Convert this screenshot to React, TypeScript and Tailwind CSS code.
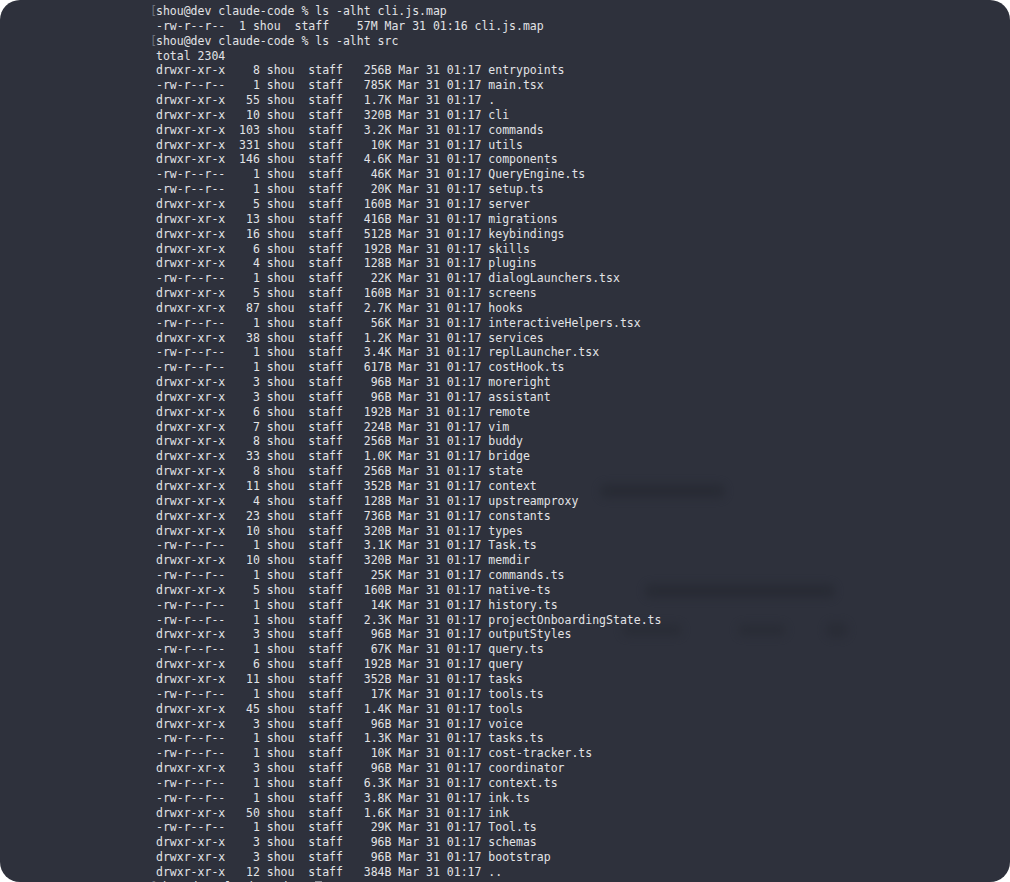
import React from "react";

type Entry = [string, number, string, string];

const DIR = "drwxr-xr-x";
const FILE = "-rw-r--r--";

const ENTRIES: Entry[] = [
  [DIR, 8, "256B", "entrypoints"],
  [FILE, 1, "785K", "main.tsx"],
  [DIR, 55, "1.7K", "."],
  [DIR, 10, "320B", "cli"],
  [DIR, 103, "3.2K", "commands"],
  [DIR, 331, "10K", "utils"],
  [DIR, 146, "4.6K", "components"],
  [FILE, 1, "46K", "QueryEngine.ts"],
  [FILE, 1, "20K", "setup.ts"],
  [DIR, 5, "160B", "server"],
  [DIR, 13, "416B", "migrations"],
  [DIR, 16, "512B", "keybindings"],
  [DIR, 6, "192B", "skills"],
  [DIR, 4, "128B", "plugins"],
  [FILE, 1, "22K", "dialogLaunchers.tsx"],
  [DIR, 5, "160B", "screens"],
  [DIR, 87, "2.7K", "hooks"],
  [FILE, 1, "56K", "interactiveHelpers.tsx"],
  [DIR, 38, "1.2K", "services"],
  [FILE, 1, "3.4K", "replLauncher.tsx"],
  [FILE, 1, "617B", "costHook.ts"],
  [DIR, 3, "96B", "moreright"],
  [DIR, 3, "96B", "assistant"],
  [DIR, 6, "192B", "remote"],
  [DIR, 7, "224B", "vim"],
  [DIR, 8, "256B", "buddy"],
  [DIR, 33, "1.0K", "bridge"],
  [DIR, 8, "256B", "state"],
  [DIR, 11, "352B", "context"],
  [DIR, 4, "128B", "upstreamproxy"],
  [DIR, 23, "736B", "constants"],
  [DIR, 10, "320B", "types"],
  [FILE, 1, "3.1K", "Task.ts"],
  [DIR, 10, "320B", "memdir"],
  [FILE, 1, "25K", "commands.ts"],
  [DIR, 5, "160B", "native-ts"],
  [FILE, 1, "14K", "history.ts"],
  [FILE, 1, "2.3K", "projectOnboardingState.ts"],
  [DIR, 3, "96B", "outputStyles"],
  [FILE, 1, "67K", "query.ts"],
  [DIR, 6, "192B", "query"],
  [DIR, 11, "352B", "tasks"],
  [FILE, 1, "17K", "tools.ts"],
  [DIR, 45, "1.4K", "tools"],
  [DIR, 3, "96B", "voice"],
  [FILE, 1, "1.3K", "tasks.ts"],
  [FILE, 1, "10K", "cost-tracker.ts"],
  [DIR, 3, "96B", "coordinator"],
  [FILE, 1, "6.3K", "context.ts"],
  [FILE, 1, "3.8K", "ink.ts"],
  [DIR, 50, "1.6K", "ink"],
  [FILE, 1, "29K", "Tool.ts"],
  [DIR, 3, "96B", "schemas"],
  [DIR, 3, "96B", "bootstrap"],
  [DIR, 12, "384B", ".."],
];

function formatEntry([perm, links, size, name]: Entry) {
  return `${perm}  ${String(links).padStart(3)} shou  staff  ${size.padStart(5)} Mar 31 01:17 ${name}`;
}

function Prompt({ cmd, cursor }: { cmd: string; cursor?: boolean }) {
  return (
    <div className="flex items-center">
      {/* terminal mark bracket hangs just left of the text column */}
      <span className="w-[6px] -ml-[6px] text-[#6f727b]">[</span>
      <span>shou@dev claude-code % {cmd}</span>
      {cursor && <span className="w-[7px] h-[13px] bg-[#8b8e96]" />}
    </div>
  );
}

export default function App() {
  return (
    <div className="w-[1010px] h-[882px] bg-white">
      <div className="relative w-full h-full rounded-[20px] bg-[#2e313c] overflow-hidden">
        {/* faint smudges left over in the capture */}
        <div className="absolute left-[600px] top-[484px] w-[125px] h-[14px] rounded-full bg-[#262932] blur-[4px] opacity-70" />
        <div className="absolute left-[645px] top-[584px] w-[190px] h-[14px] rounded-full bg-[#262932] blur-[4px] opacity-70" />
        <div className="absolute left-[622px] top-[624px] w-[60px] h-[12px] rounded-full bg-[#272a33] blur-[4px] opacity-60" />
        <div className="absolute left-[738px] top-[624px] w-[48px] h-[12px] rounded-full bg-[#272a33] blur-[4px] opacity-60" />
        <div className="absolute left-[826px] top-[622px] w-[22px] h-[16px] rounded-full bg-[#272a33] blur-[4px] opacity-60" />

        <div className="relative flex flex-col pl-[156px] pt-[4px] whitespace-pre text-[11.5px] leading-[14.84px] text-[#e2e3e6] font-['DejaVu_Sans_Mono','Liberation_Mono',monospace]">
          <Prompt cmd="ls -alht cli.js.map" />
          <div>{"-rw-r--r--  1 shou  staff    57M Mar 31 01:16 cli.js.map"}</div>
          <Prompt cmd="ls -alht src" />
          <div>total 2304</div>
          {ENTRIES.map((e, i) => (
            <div key={i}>{formatEntry(e)}</div>
          ))}
          <Prompt cmd="" cursor />
        </div>
      </div>
    </div>
  );
}
